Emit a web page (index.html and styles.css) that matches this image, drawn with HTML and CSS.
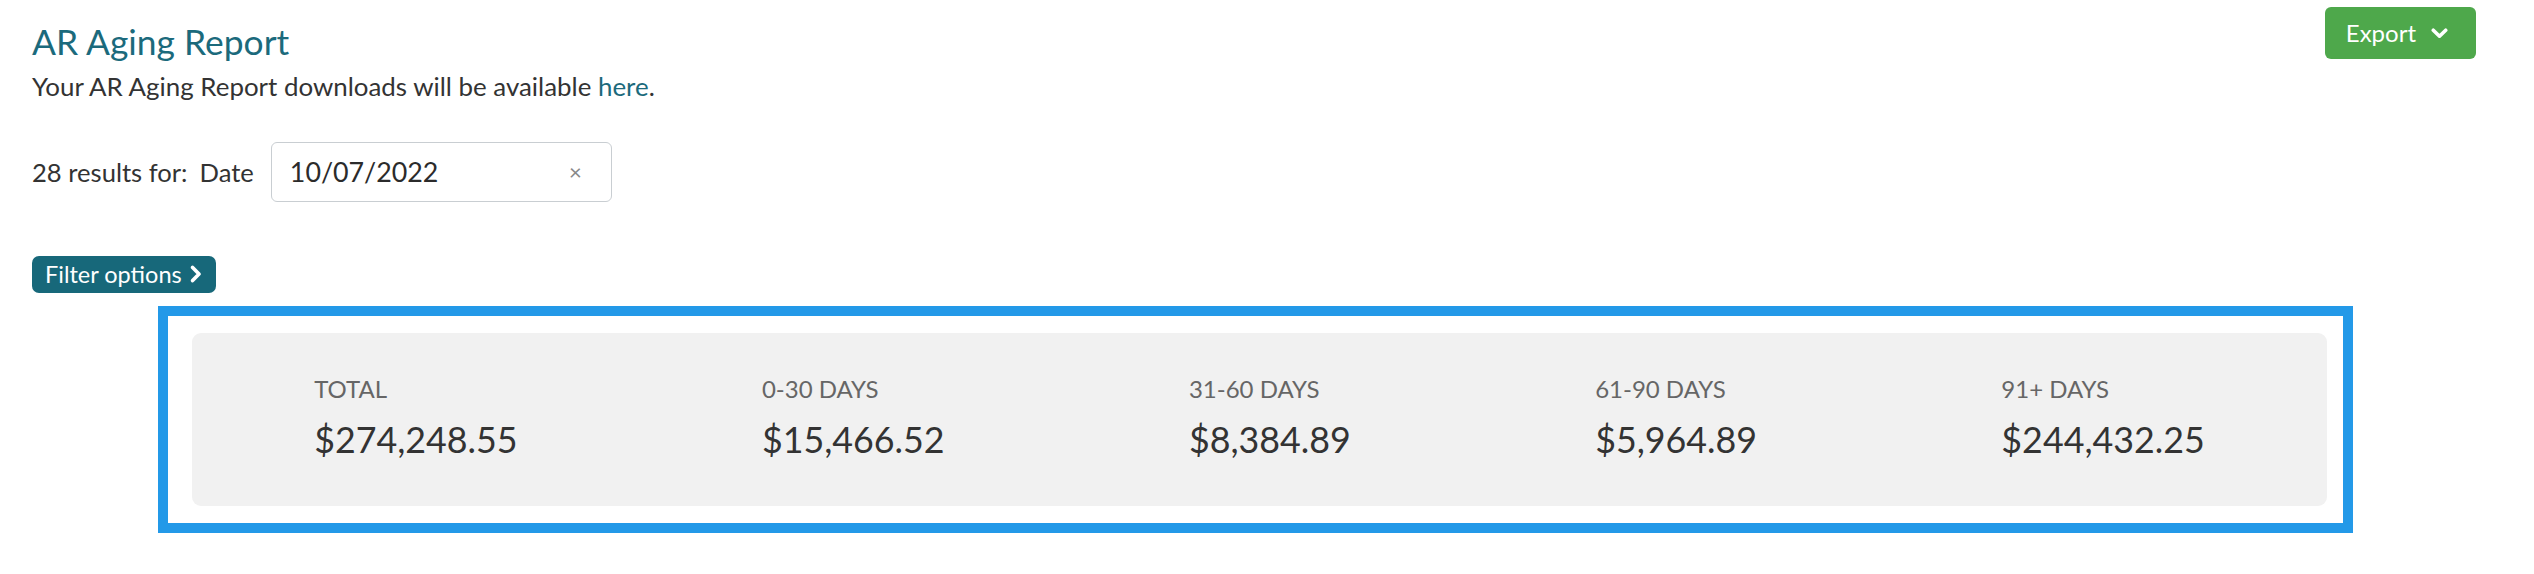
FILE: index.html
```html
<!DOCTYPE html>
<html lang="en">
<head>
<meta charset="utf-8">
<title>AR Aging Report</title>
<link rel="stylesheet" href="styles.css">
</head>
<body>
<div class="page">
  <div class="header">
    <div class="header-text">
      <h1 class="title">AR Aging Report</h1>
      <p class="note">Your AR Aging Report downloads will be available <a class="link" href="#">here</a>.</p>
    </div>
    <button class="export" type="button">Export
      <svg class="export-chev" width="17" height="11" viewBox="0 0 17 11"><path d="M2.3 2.2 L8.5 8.2 L14.7 2.2" fill="none" stroke="#fff" stroke-width="3.6" stroke-linecap="round" stroke-linejoin="round"/></svg>
    </button>
  </div>

  <div class="results">
    <span class="results-count">28 results for:</span>
    <span class="results-field">Date</span>
    <div class="date-input">
      <span class="date-value">10/07/2022</span>
      <span class="clear">&times;</span>
    </div>
  </div>

  <button class="filter" type="button">Filter options
    <svg class="filter-chev" width="12" height="18" viewBox="0 0 12 18"><path d="M2.6 2.4 L9 9 L2.6 15.6" fill="none" stroke="#fff" stroke-width="3.6" stroke-linecap="round" stroke-linejoin="round"/></svg>
  </button>

  <div class="highlight">
    <div class="summary">
      <div class="stat">
        <div class="stat-label">TOTAL</div>
        <div class="stat-value">$274,248.55</div>
      </div>
      <div class="stat">
        <div class="stat-label">0-30 DAYS</div>
        <div class="stat-value">$15,466.52</div>
      </div>
      <div class="stat">
        <div class="stat-label">31-60 DAYS</div>
        <div class="stat-value">$8,384.89</div>
      </div>
      <div class="stat">
        <div class="stat-label">61-90 DAYS</div>
        <div class="stat-value">$5,964.89</div>
      </div>
      <div class="stat">
        <div class="stat-label">91+ DAYS</div>
        <div class="stat-value">$244,432.25</div>
      </div>
    </div>
  </div>
</div>
</body>
</html>
```

FILE: styles.css
```css
html, body {
  margin: 0;
  padding: 0;
  background: #ffffff;
}

body {
  font-family: "Lato", "Liberation Sans", sans-serif;
  color: #333333;
}

.page {
  padding: 7px 58px 0 32px;
}

.header {
  display: flex;
  justify-content: space-between;
  align-items: flex-start;
}

.header-text {
  padding-top: 14px;
}

.title {
  margin: 0;
  font-size: 35.4px;
  line-height: 42.24px;
  font-weight: 400;
  color: #1b6a7c;
}

.note {
  margin: 7px 0 0 0;
  font-size: 25.9px;
  line-height: 33.6px;
  color: #333333;
}

.link {
  color: #1b6a7c;
  text-decoration: none;
}

.export {
  display: flex;
  align-items: center;
  gap: 15px;
  height: 52px;
  padding: 0 28px 0 21px;
  border: none;
  border-radius: 6px;
  background: #4ea84b;
  color: #ffffff;
  font-family: "Lato", "Liberation Sans", sans-serif;
  font-size: 24px;
  line-height: 52px;
}

.export-chev {
  display: block;
  margin-top: 1px;
}

.results {
  display: flex;
  align-items: center;
  height: 60px;
  margin-top: 38px;
  font-size: 25.6px;
  color: #333333;
}

.results-field {
  margin-left: 12px;
}

.date-input {
  display: flex;
  align-items: center;
  justify-content: space-between;
  box-sizing: border-box;
  width: 341px;
  height: 60px;
  margin-left: 17px;
  padding: 0 29px 0 18px;
  border: 1.5px solid #c9ced2;
  border-radius: 6px;
  background: #ffffff;
}

.date-value {
  font-size: 26.8px;
  color: #2b2b2b;
}

.clear {
  font-size: 22px;
  color: #888888;
}

.filter {
  display: flex;
  align-items: center;
  gap: 8px;
  height: 37px;
  margin-top: 54px;
  padding: 0 14px 0 13px;
  border: none;
  border-radius: 7px;
  background: #17687a;
  color: #ffffff;
  font-family: "Lato", "Liberation Sans", sans-serif;
  font-size: 23.5px;
  line-height: 37px;
}

.filter-chev {
  display: block;
}

.highlight {
  margin: 13px 123px 0 126px;
  padding: 17px 16px 17px 24px;
  border: 10px solid #2399e8;
}

.summary {
  display: flex;
  justify-content: space-around;
  padding: 42px 0 44px 0;
  border-radius: 9px;
  background: #f1f1f1;
}

.stat-label {
  font-size: 24px;
  line-height: 1.2;
  color: #666666;
}

.stat-value {
  margin-top: 15px;
  font-size: 35.8px;
  line-height: 1.2;
  color: #333333;
}
```
